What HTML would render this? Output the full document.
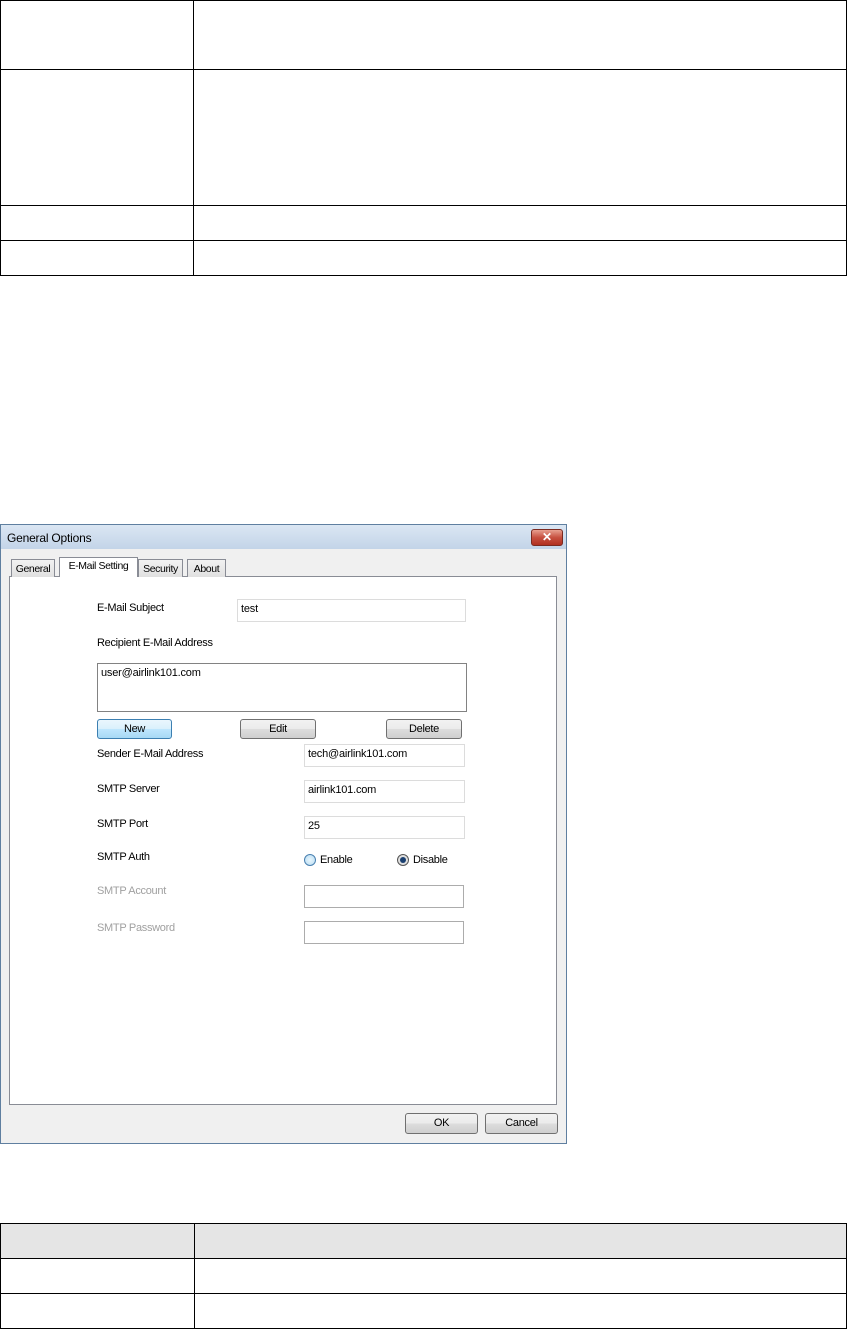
<!DOCTYPE html>
<html><head><style>
body{margin:0;width:847px;height:1329px;background:#fff;position:relative;font-family:"Liberation Sans",sans-serif;overflow:hidden}
.a{position:absolute}
.l{position:absolute;background:#000}
.t{position:absolute;font-size:11px;color:#000;line-height:13px;white-space:nowrap;letter-spacing:-0.3px}
.g{color:#a0a0a0}
.in{position:absolute;background:#fff;border:1px solid #c8c8c8;box-sizing:border-box;font-size:11px;padding:2px 3px;line-height:14px;white-space:nowrap;letter-spacing:-0.2px}
.b{position:absolute;box-sizing:border-box;border:1px solid #707070;border-radius:3px;background:linear-gradient(#f2f2f2 0%,#ebebeb 50%,#dddddd 51%,#cfcfcf 100%);font-size:11px;text-align:center;line-height:18px;letter-spacing:-0.3px}
.tab{position:absolute;box-sizing:border-box;border:1px solid #898c95;border-bottom:none;background:linear-gradient(#f2f2f2,#e0e0e0);font-size:10.5px;text-align:center;line-height:18px;white-space:nowrap;letter-spacing:-0.4px;overflow:hidden}
</style></head><body>
<div class="l" style="left:0;top:0;width:847px;height:1px"></div>
<div class="l" style="left:0;top:69px;width:847px;height:1px"></div>
<div class="l" style="left:0;top:205px;width:847px;height:1px"></div>
<div class="l" style="left:0;top:240px;width:847px;height:1px"></div>
<div class="l" style="left:0;top:275px;width:847px;height:1px"></div>
<div class="l" style="left:0;top:0;width:1px;height:276px"></div>
<div class="l" style="left:846px;top:0;width:1px;height:276px"></div>
<div class="l" style="left:193px;top:0;width:1px;height:276px"></div>

<div class="a" style="left:0;top:524px;width:567px;height:620px;box-sizing:border-box;border:1px solid #5f7fa0;background:#f0f0f0"></div>
<div class="a" style="left:1px;top:525px;width:565px;height:24px;background:linear-gradient(#dbe6f3,#c3d4e8)"></div>
<div class="t" style="left:7px;top:531px;font-size:12px;line-height:14px;letter-spacing:-0.2px">General Options</div>
<div class="a" style="left:531px;top:529px;width:32px;height:17px;box-sizing:border-box;border:1px solid #7a2a20;border-radius:3px;background:linear-gradient(#e8a090,#c75040 50%,#b03020);color:#fff;font-size:12px;font-weight:bold;text-align:center;line-height:15px">✕</div>
<div class="a" style="left:1px;top:549px;width:565px;height:594px;background:#f0f0f0"></div>
<div class="a" style="left:9px;top:576px;width:548px;height:529px;box-sizing:border-box;border:1px solid #898c95;background:#fff"></div>
<div class="tab" style="left:11px;top:559px;width:44px;height:18px">General</div>
<div class="tab" style="left:59px;top:557px;width:79px;height:20px;background:#fff;line-height:17px">E-Mail Setting</div>
<div class="a" style="left:60px;top:576px;width:77px;height:2px;background:#fff"></div>
<div class="tab" style="left:138px;top:559px;width:45px;height:18px">Security</div>
<div class="tab" style="left:187px;top:559px;width:39px;height:18px">About</div>

<div class="t" style="left:97px;top:602px">E-Mail Subject</div>
<div class="in" style="left:237px;top:599px;width:229px;height:23px;border-color:#dcdcdc">test</div>
<div class="t" style="left:97px;top:637px">Recipient E-Mail Address</div>
<div class="in" style="left:97px;top:663px;width:370px;height:49px;border-color:#828282;padding-top:2px">user@airlink101.com</div>
<div class="b" style="left:97px;top:719px;width:75px;height:20px;border-color:#3c7fb1;background:linear-gradient(#eaf6fd,#d9f0fc 50%,#bee6fd 51%,#a7d9f5)">New</div>
<div class="b" style="left:240px;top:719px;width:76px;height:20px">Edit</div>
<div class="b" style="left:386px;top:719px;width:76px;height:20px">Delete</div>

<div class="t" style="left:97px;top:748px">Sender E-Mail Address</div>
<div class="in" style="left:304px;top:744px;width:161px;height:23px;border-color:#dcdcdc">tech@airlink101.com</div>
<div class="t" style="left:97px;top:783px">SMTP Server</div>
<div class="in" style="left:304px;top:780px;width:161px;height:23px;border-color:#dcdcdc">airlink101.com</div>
<div class="t" style="left:97px;top:818px">SMTP Port</div>
<div class="in" style="left:304px;top:816px;width:161px;height:23px;border-color:#dcdcdc">25</div>
<div class="t" style="left:97px;top:851px">SMTP Auth</div>
<div class="a" style="left:304px;top:854px;width:12px;height:12px;border-radius:50%;box-sizing:border-box;border:1px solid #4a80b0;background:radial-gradient(#e8f6fd,#b8dcf2)"></div>
<div class="t" style="left:320px;top:854px">Enable</div>
<div class="a" style="left:397px;top:854px;width:12px;height:12px;border-radius:50%;box-sizing:border-box;border:1px solid #555;background:#e0e0e0"></div>
<div class="a" style="left:400px;top:857px;width:6px;height:6px;border-radius:50%;background:#1a3f70"></div>
<div class="t" style="left:413px;top:854px">Disable</div>
<div class="t g" style="left:97px;top:885px">SMTP Account</div>
<div class="in" style="left:304px;top:885px;width:160px;height:23px;border-color:#acacac"></div>
<div class="t g" style="left:97px;top:922px">SMTP Password</div>
<div class="in" style="left:304px;top:921px;width:160px;height:23px;border-color:#acacac"></div>

<div class="b" style="left:405px;top:1113px;width:73px;height:21px">OK</div>
<div class="b" style="left:485px;top:1113px;width:73px;height:21px">Cancel</div>

<div class="a" style="left:0;top:1223px;width:847px;height:35px;background:#e5e5e5"></div>
<div class="l" style="left:0;top:1223px;width:847px;height:1px"></div>
<div class="l" style="left:0;top:1258px;width:847px;height:1px"></div>
<div class="l" style="left:0;top:1293px;width:847px;height:1px"></div>
<div class="l" style="left:0;top:1328px;width:847px;height:1px"></div>
<div class="l" style="left:0;top:1223px;width:1px;height:106px"></div>
<div class="l" style="left:846px;top:1223px;width:1px;height:106px"></div>
<div class="l" style="left:194px;top:1223px;width:1px;height:106px"></div>
</body></html>
